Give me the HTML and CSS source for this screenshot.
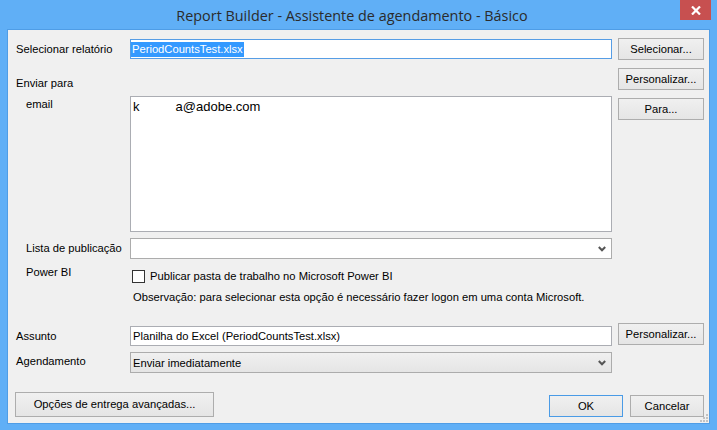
FILE: index.html
```html
<!DOCTYPE html>
<html lang="pt">
<head>
<meta charset="utf-8">
<link rel="stylesheet" href="styles.css">
</head>
<body>
<div class="window">
  <div class="titlebar">
    <div class="title">Report Builder - Assistente de agendamento - Básico</div>
    <div class="close"><svg width="10" height="9" viewBox="0 0 10 9"><path d="M1 0.5 L9 8.5 M9 0.5 L1 8.5" stroke="#fff" stroke-width="2.2"/></svg></div>
  </div>
  <div class="client">
    <div class="row r1">
      <div class="lbl">Selecionar relatório</div>
      <div class="input focus"><span class="sel">PeriodCountsTest.xlsx</span></div>
      <div class="btn">Selecionar...</div>
    </div>
    <div class="row r2">
      <div class="lbl lbl-low">Enviar para</div>
      <div></div>
      <div class="btn">Personalizar...</div>
    </div>
    <div class="row r3">
      <div class="lbl sub lbl-top">email</div>
      <div class="textarea">k          a@adobe.com</div>
      <div class="btn btn-para">Para...</div>
    </div>
    <div class="row r4">
      <div class="lbl sub">Lista de publicação</div>
      <div class="select white"><span></span><svg class="chev" width="8" height="6" viewBox="0 0 8 6"><path d="M0.8 1 L4 4.3 L7.2 1" fill="none" stroke="#555" stroke-width="2"/></svg></div>
      <div></div>
    </div>
    <div class="row r5">
      <div class="lbl sub">Power BI</div>
      <div class="check-line"><span class="checkbox"></span><span class="txt">Publicar pasta de trabalho no Microsoft Power BI</span></div>
      <div></div>
    </div>
    <div class="row r6">
      <div></div>
      <div class="note">Observação: para selecionar esta opção é necessário fazer logon em uma conta Microsoft.</div>
      <div></div>
    </div>
    <div class="row r7">
      <div class="lbl lbl-assunto">Assunto</div>
      <div class="input input-assunto">Planilha do Excel (PeriodCountsTest.xlsx)</div>
      <div class="btn">Personalizar...</div>
    </div>
    <div class="row r8">
      <div class="lbl lbl-agenda">Agendamento</div>
      <div class="select gray"><span>Enviar imediatamente</span><svg class="chev" width="8" height="6" viewBox="0 0 8 6"><path d="M0.8 1 L4 4.3 L7.2 1" fill="none" stroke="#555" stroke-width="2"/></svg></div>
      <div></div>
    </div>
    <div class="bottom">
      <div class="btn btn-wide">Opções de entrega avançadas...</div>
      <div class="spacer"></div>
      <div class="btn btn-ok">OK</div>
      <div class="btn btn-cancel">Cancelar</div>
    </div>
    <svg class="grip" width="8" height="8" viewBox="0 0 8 8">
      <rect x="6" y="0" width="2" height="2" fill="#c2c2c2"/>
      <rect x="3" y="3" width="2" height="2" fill="#c2c2c2"/>
      <rect x="6" y="3" width="2" height="2" fill="#c2c2c2"/>
      <rect x="0" y="6" width="2" height="2" fill="#c2c2c2"/>
      <rect x="3" y="6" width="2" height="2" fill="#c2c2c2"/>
      <rect x="6" y="6" width="2" height="2" fill="#c2c2c2"/>
    </svg>
  </div>
</div>
</body>
</html>
```
FILE: styles.css
```css
html, body {
  margin: 0;
  padding: 0;
}
body {
  width: 717px;
  height: 430px;
  overflow: hidden;
  background: #60aff6;
  font-family: "Liberation Sans", Arial, sans-serif;
  font-size: 11.2px;
  color: #000;
}
.window {
  width: 717px;
  height: 430px;
  display: flex;
  flex-direction: column;
  background: #60aff6;
}
.titlebar {
  height: 30px;
  display: flex;
  align-items: flex-start;
}
.title {
  flex: 1;
  text-align: center;
  font-family: "Open Sans", "Noto Sans", sans-serif;
  font-size: 14.4px;
  line-height: 31px;
  color: #2b2b2b;
  padding-left: 24px;
}
.close {
  width: 31px;
  height: 20px;
  margin-right: 6px;
  background: #c75050;
  display: flex;
  align-items: center;
  justify-content: center;
}
.client {
  position: relative;
  margin: 0 8px;
  height: 393px;
  box-sizing: border-box;
  background: #f0f0f0;
  box-shadow: 0 0 0 1px #4f9de6;
  padding: 8px 5px 0 8px;
}
.row {
  display: grid;
  grid-template-columns: 114px 482px 92px;
  column-gap: 0;
}
.row > .btn {
  justify-self: end;
  width: 86px;
}
.lbl {
  line-height: 13px;
  white-space: nowrap;
}
.sub {
  padding-left: 10px;
}
.btn {
  box-sizing: border-box;
  height: 22px;
  border: 1px solid #adadad;
  background: linear-gradient(#f0f0f0, #e5e5e5);
  display: flex;
  align-items: center;
  justify-content: center;
  white-space: nowrap;
  line-height: 13px;
}
.input {
  box-sizing: border-box;
  height: 20px;
  border: 1px solid #abadb3;
  background: #fff;
  display: flex;
  align-items: center;
  padding-left: 2px;
  white-space: nowrap;
}
.input.focus {
  border-color: #569de5;
  padding-left: 0;
}
.sel {
  background: #3399ff;
  color: #fff;
  line-height: 15px;
  padding: 0 1px;
}
/* row 1 */
.r1 {
  height: 22px;
  align-items: center;
}
/* row 2 */
.r2 {
  margin-top: 8px;
  height: 22px;
}
.lbl-low {
  padding-top: 9px;
}
/* row 3 */
.r3 {
  margin-top: 6px;
  align-items: start;
}
.lbl-top {
  padding-top: 2px;
}
.textarea {
  box-sizing: border-box;
  height: 136px;
  border: 1px solid #abadb3;
  background: #fff;
  font-size: 13px;
  line-height: 15px;
  padding: 2px 2px;
  white-space: pre;
}
.btn-para {
  margin-top: 2px;
}
/* row 4 */
.r4 {
  margin-top: 6px;
  height: 21px;
  align-items: center;
}
.select {
  box-sizing: border-box;
  height: 21px;
  border: 1px solid #acacac;
  display: flex;
  align-items: center;
  justify-content: space-between;
  padding: 0 5px 0 2px;
  white-space: nowrap;
}
.select.white {
  background: #fff;
}
.select.gray {
  background: linear-gradient(#f0f0f0, #e5e5e5);
}
.chev {
  display: block;
}
/* row 5 */
.r5 {
  margin-top: 7px;
  height: 17px;
}
.check-line {
  display: flex;
  align-items: center;
  padding-top: 3px;
  height: 14px;
}
.checkbox {
  box-sizing: border-box;
  width: 13px;
  height: 13px;
  border: 1px solid #333;
  background: #fff;
  margin-left: 2px;
  margin-right: 5px;
}
.txt {
  line-height: 13px;
}
/* row 6 */
.r6 {
  margin-top: 8px;
  height: 13px;
}
.note {
  line-height: 13px;
  padding-left: 3px;
  white-space: nowrap;
}
/* row 7 */
.r7 {
  margin-top: 19px;
  height: 22px;
  align-items: start;
}
.lbl-assunto {
  padding-top: 7px;
}
.input-assunto {
  margin-top: 3px;
}
/* row 8 */
.r8 {
  margin-top: 7px;
  height: 21px;
  align-items: start;
}
.lbl-agenda {
  padding-top: 3px;
}
/* bottom */
.bottom {
  margin-top: 19px;
  display: flex;
  align-items: flex-end;
  width: 688px;
}
.btn-wide {
  height: 25px;
  width: 199px;
  margin-left: -1px;
}
.spacer {
  flex: 1;
}
.btn-ok {
  width: 74px;
  border-color: #4a9be6;
}
.btn-cancel {
  width: 74px;
  margin-left: 7px;
}
.grip {
  position: absolute;
  right: 1px;
  bottom: 1px;
}
```
